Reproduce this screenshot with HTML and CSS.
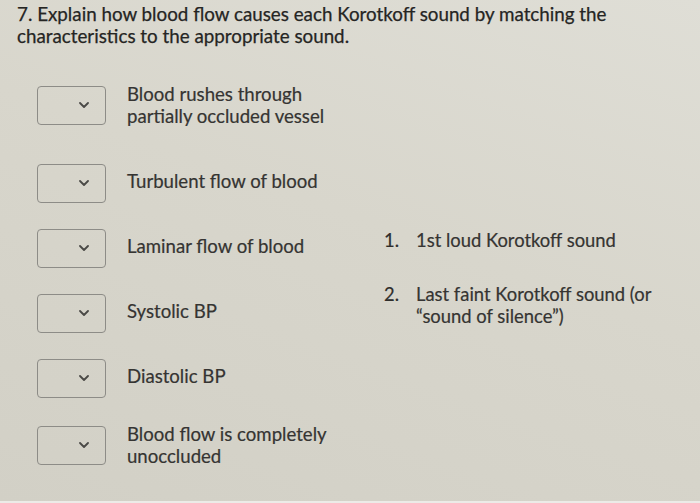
FILE: index.html
```html
<!DOCTYPE html>
<html lang="en">
<head>
<meta charset="utf-8">
<title>Question 7</title>
<link rel="stylesheet" href="styles.css">
</head>
<body>
<main class="question">
  <p class="prompt">7. Explain how blood flow causes each Korotkoff sound by matching the characteristics to the appropriate sound.</p>

  <div class="match">
    <ul class="pairs">
      <li class="pair pair--first">
        <span class="select"><svg class="chev" viewBox="0 0 10 6" width="10" height="6"><path d="M1 1l4 4 4-4"/></svg></span>
        <span class="label label--two">Blood rushes through<br>partially occluded vessel</span>
      </li>
      <li class="pair">
        <span class="select"><svg class="chev" viewBox="0 0 10 6" width="10" height="6"><path d="M1 1l4 4 4-4"/></svg></span>
        <span class="label">Turbulent flow of blood</span>
      </li>
      <li class="pair">
        <span class="select"><svg class="chev" viewBox="0 0 10 6" width="10" height="6"><path d="M1 1l4 4 4-4"/></svg></span>
        <span class="label">Laminar flow of blood</span>
      </li>
      <li class="pair">
        <span class="select"><svg class="chev" viewBox="0 0 10 6" width="10" height="6"><path d="M1 1l4 4 4-4"/></svg></span>
        <span class="label">Systolic BP</span>
      </li>
      <li class="pair">
        <span class="select"><svg class="chev" viewBox="0 0 10 6" width="10" height="6"><path d="M1 1l4 4 4-4"/></svg></span>
        <span class="label">Diastolic BP</span>
      </li>
      <li class="pair">
        <span class="select"><svg class="chev" viewBox="0 0 10 6" width="10" height="6"><path d="M1 1l4 4 4-4"/></svg></span>
        <span class="label label--two">Blood flow is completely<br>unoccluded</span>
      </li>
    </ul>

    <ol class="answers">
      <li class="answer"><span class="num">1.</span><span class="text">1st loud Korotkoff sound</span></li>
      <li class="answer"><span class="num">2.</span><span class="text">Last faint Korotkoff sound (or<br>“sound of silence”)</span></li>
    </ol>
  </div>
</main>
</body>
</html>
```

FILE: styles.css
```css
html, body {
  margin: 0;
  padding: 0;
}

body {
  width: 700px;
  height: 501px;
  background: linear-gradient(200deg, #dfded6 0%, #d8d6cc 45%, #d2d0c6 100%);
  border-bottom: 2px solid #ecebe7;
  font-family: Lato, "Open Sans", sans-serif;
  color: #2f2e2c;
  overflow: hidden;
}

.question {
  padding: 3px 17px 0 17px;
}

.prompt {
  margin: 0;
  width: 640px;
  font-size: 18.8px;
  line-height: 22px;
  color: #252523;
  -webkit-text-stroke: 0.25px #252523;
}

.match {
  display: flex;
  margin-top: 36px;
  padding-left: 20px;
}

.pairs {
  list-style: none;
  margin: 0;
  padding: 0;
  width: 347px;
  display: flex;
  flex-direction: column;
  gap: 25px;
}

.pair {
  display: flex;
  align-items: center;
  gap: 21px;
  min-height: 40px;
}

.pair--first {
  margin-bottom: 11px;
}

.select {
  flex: none;
  box-sizing: content-box;
  width: 51px;
  height: 37px;
  padding-right: 16px;
  border: 1.5px solid #8d8c87;
  border-radius: 4px;
  display: flex;
  align-items: center;
  justify-content: flex-end;
}

.chev {
  display: block;
  fill: none;
  stroke: #4a4946;
  stroke-width: 1.8;
  stroke-linecap: round;
  stroke-linejoin: round;
}

/* single-line labels sit a little above the box centre */
.label {
  font-size: 18.6px;
  line-height: 22px;
  padding-bottom: 5px;
  color: #353432;
  -webkit-text-stroke: 0.2px #353432;
}

.label--two {
  padding-bottom: 0;
}

.answers {
  list-style: none;
  margin: 0;
  padding: 146px 0 0 0;
  display: flex;
  flex-direction: column;
  gap: 32px;
}

.answer {
  display: flex;
  font-size: 18.4px;
  line-height: 22px;
  color: #353432;
  -webkit-text-stroke: 0.2px #353432;
}

.num {
  width: 32px;
  flex: none;
  color: #2e2d2b;
}
```
